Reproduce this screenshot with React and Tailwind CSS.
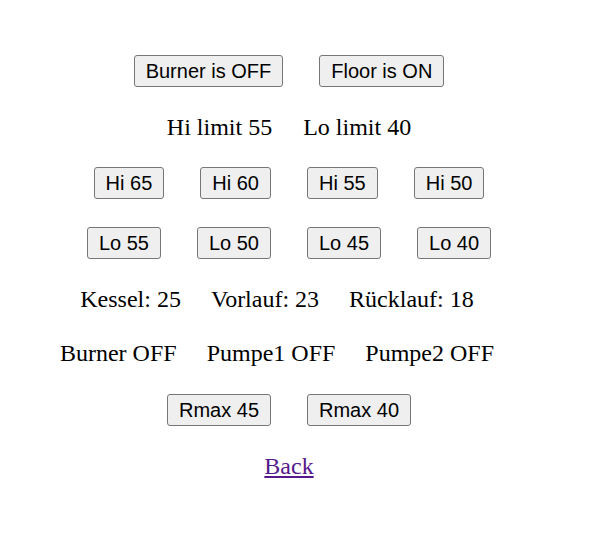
import React from "react";

const Btn = ({ children }) => (
  <button className="px-[11px] py-[3px] border border-[#767676] rounded-[3px] bg-[#efefef] text-black text-[20px] leading-[24px] font-['Liberation_Sans',Arial,sans-serif] whitespace-nowrap">
    {children}
  </button>
);

export default function App() {
  return (
    <div className="w-[578px] h-[540px] bg-white text-black font-['Liberation_Serif','Times_New_Roman',serif] text-[24px] flex flex-col items-center">
      <div className="h-[43px]" />
      <div className="h-[56px] flex items-center justify-center gap-[36px]">
        <Btn>Burner is OFF</Btn>
        <Btn>Floor is ON</Btn>
      </div>
      <div className="h-[56px] flex items-center justify-center gap-[31px] whitespace-nowrap">
        <span>Hi limit 55</span>
        <span>Lo limit 40</span>
      </div>
      <div className="h-[56px] flex items-center justify-center gap-[36px]">
        <Btn>Hi 65</Btn>
        <Btn>Hi 60</Btn>
        <Btn>Hi 55</Btn>
        <Btn>Hi 50</Btn>
      </div>
      <div className="h-[63px] flex items-center justify-center gap-[36px]">
        <Btn>Lo 55</Btn>
        <Btn>Lo 50</Btn>
        <Btn>Lo 45</Btn>
        <Btn>Lo 40</Btn>
      </div>
      <div className="h-[50px] flex items-center justify-center gap-[30px] pr-[24px] whitespace-nowrap">
        <span>Kessel: 25</span>
        <span>Vorlauf: 23</span>
        <span>Rücklauf: 18</span>
      </div>
      <div className="h-[58px] flex items-center justify-center gap-[30px] pr-[24px] whitespace-nowrap">
        <span>Burner OFF</span>
        <span>Pumpe1 OFF</span>
        <span>Pumpe2 OFF</span>
      </div>
      <div className="h-[55px] flex items-center justify-center gap-[36px]">
        <Btn>Rmax 45</Btn>
        <Btn>Rmax 40</Btn>
      </div>
      <div className="h-[58px] flex items-center justify-center">
        <a href="#" className="text-[#551a8b] underline">Back</a>
      </div>
    </div>
  );
}
